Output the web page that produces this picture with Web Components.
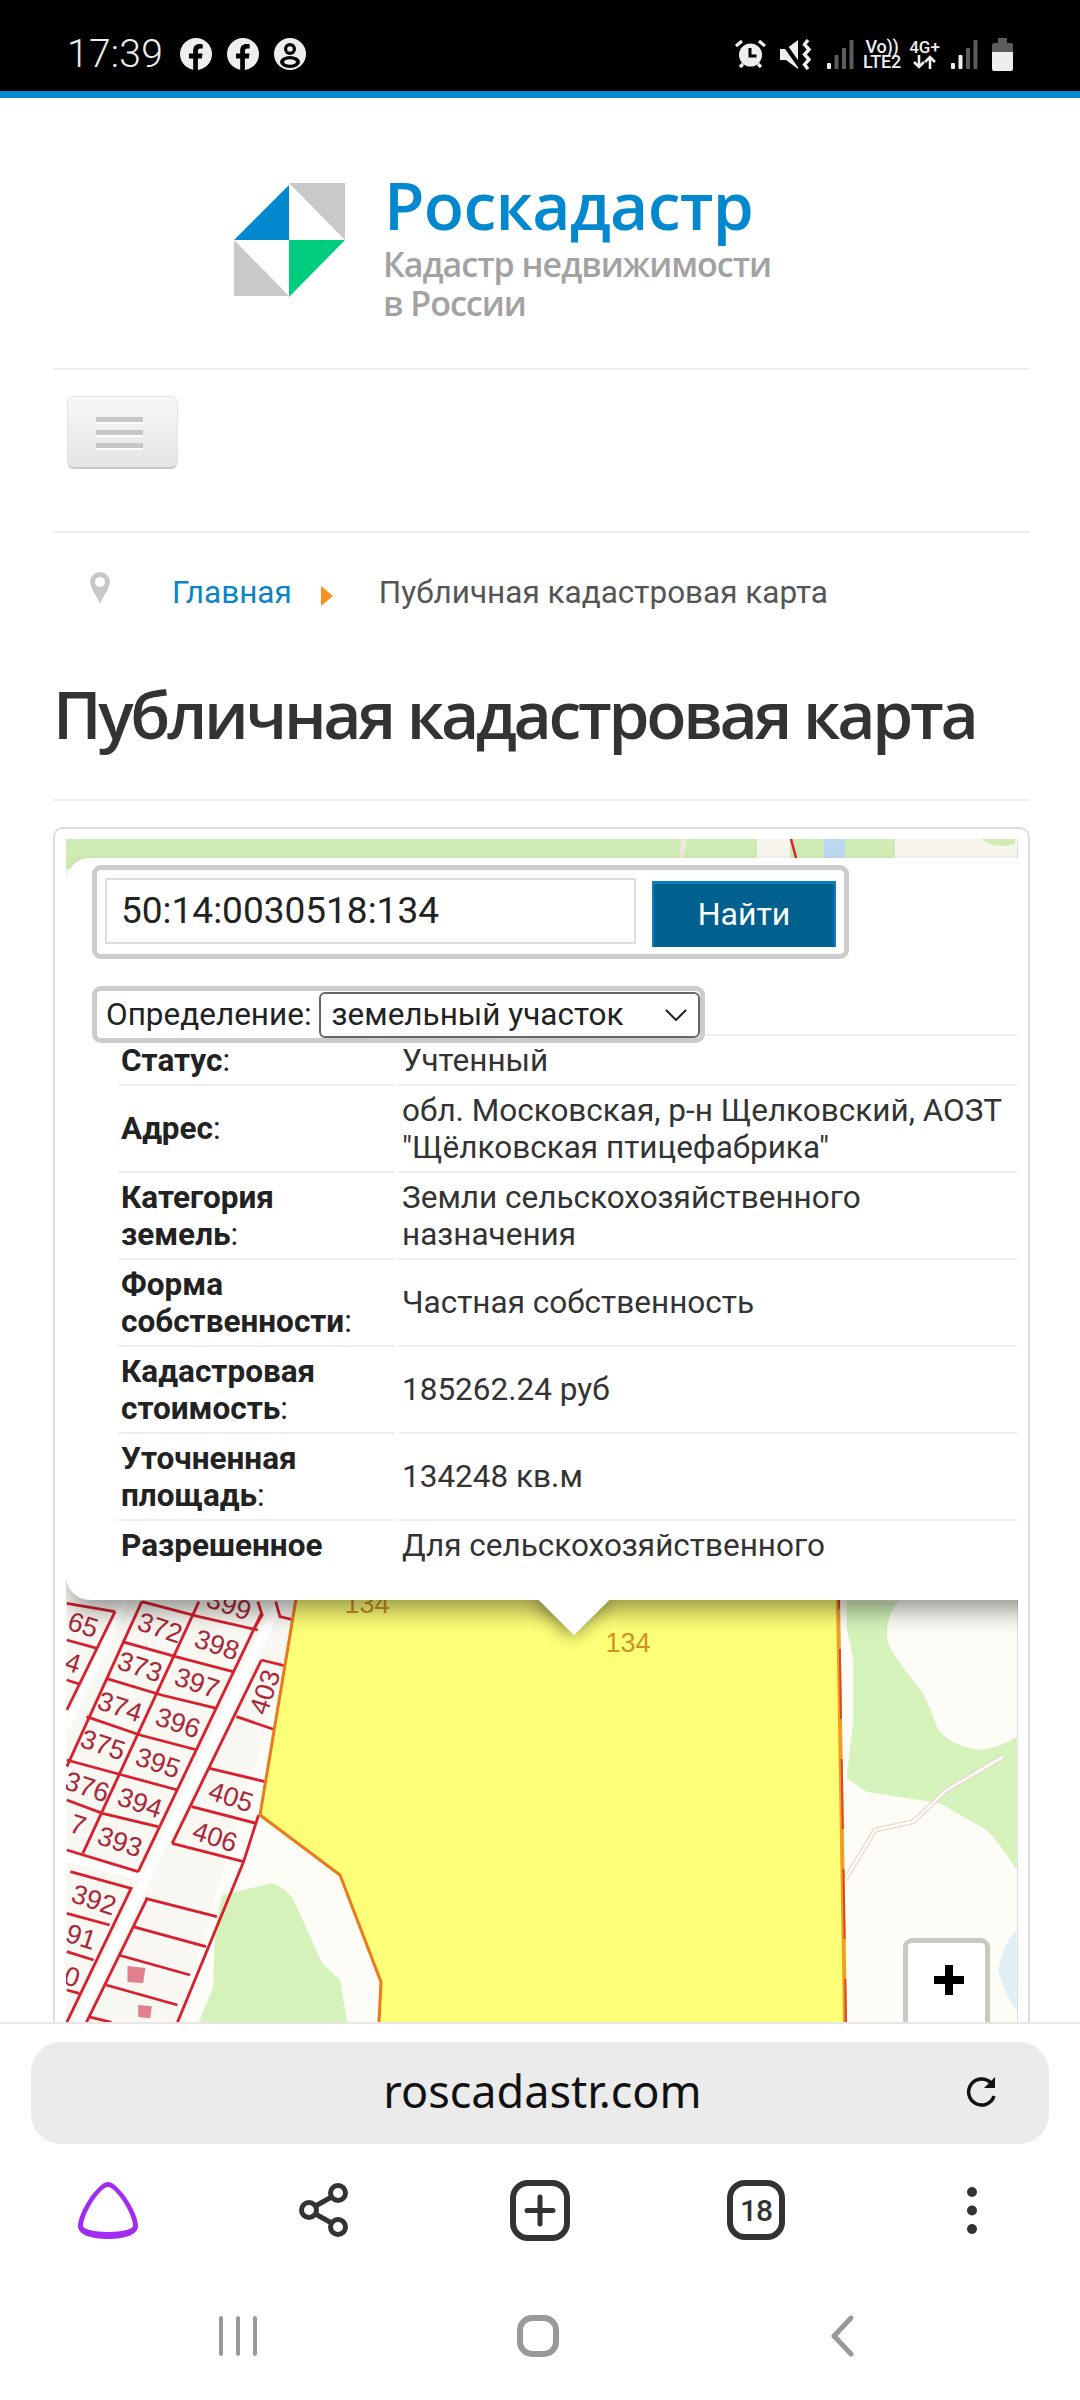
<!DOCTYPE html>
<html lang="ru">
<head>
<meta charset="utf-8">
<title>Публичная кадастровая карта</title>
<style>
  html, body { margin: 0; height: 2400px; overflow: hidden; background: #fff; }
  body { display: flex; flex-direction: column; font-family: Roboto, sans-serif; }
  main { display: block; flex: 1; min-height: 0; overflow: hidden; padding: 0 50px 0 53px; }
</style>
</head>
<body>
<status-bar></status-bar>
<main>
  <site-logo></site-logo>
  <site-menu></site-menu>
  <bread-crumbs><a slot="home">Главная</a><span slot="current">Публичная кадастровая карта</span></bread-crumbs>
  <page-title>Публичная кадастровая карта</page-title>
  <map-card>
    <map-popup>
      <search-form value="50:14:0030518:134" button="Найти" label="Определение:" selected="земельный участок"></search-form>
      <info-row><span slot="label"><b>Статус</b>:</span>Учтенный</info-row>
      <info-row><span slot="label"><b>Адрес</b>:</span>обл. Московская, р-н Щелковский, АОЗТ "Щёлковская птицефабрика"</info-row>
      <info-row><span slot="label"><b>Категория земель</b>:</span>Земли сельскохозяйственного назначения</info-row>
      <info-row><span slot="label"><b>Форма собственности</b>:</span>Частная собственность</info-row>
      <info-row><span slot="label"><b>Кадастровая стоимость</b>:</span>185262.24 руб</info-row>
      <info-row><span slot="label"><b>Уточненная площадь</b>:</span>134248 кв.м</info-row>
      <info-row last><span slot="label"><b>Разрешенное</b></span>Для сельскохозяйственного</info-row>
    </map-popup>
  </map-card>
</main>
<browser-bar url="roscadastr.com" tabs="18"></browser-bar>
<nav-bar></nav-bar>

<script>
class StatusBar extends HTMLElement {
  constructor () {
    super()
    this.shadow = this.attachShadow({ mode: 'open' })
  }

  signal (bright) {
    const bars = [[0, 23, 6], [7.5, 15, 14], [15, 8, 21], [22.5, 0, 29]]
    return `<svg width="27" height="29" viewBox="0 0 27 29">${bars.map((b, i) =>
      `<rect x="${b[0]}" y="${b[1]}" width="4" height="${b[2]}" rx="1" fill="${i < bright ? '#eee' : '#5c5c5c'}"/>`).join('')}</svg>`
  }

  facebook () {
    return `<svg width="32" height="32" viewBox="0 0 32 32"><circle cx="16" cy="16" r="16" fill="#eee"/>
      <path d="M13.2 32V20.500H9v-4.900h4.200v-3.200c0-4.200 2.500-6.400 6.200-6.400 1.300 0 2.600.1 3.300.2v4.200h-2.200c-2 0-2.600 1.100-2.600 2.400v2.800h4.600l-.7 4.900h-3.900V32z" fill="#000"/></svg>`
  }

  connectedCallback () {
    this.shadow.innerHTML = `
      <style>
        :host { display: flex; align-items: center; box-sizing: border-box; height: 98px; padding: 17px 67px 0 67px;
          background: #000; border-bottom: 7px solid #0288cf; color: #eee; font-family: Roboto, sans-serif; }
        .time { font-size: 39px; font-weight: 300; width: 113px; letter-spacing: .3px; }
        .left, .right { display: flex; align-items: center; }
        .left { gap: 15px; }
        .left svg { display: block; }
        .right { margin-left: auto; }
        .right svg { display: block; }
        .net { display: flex; flex-direction: column; align-items: center; font-weight: 500; }
        .vo { width: 40px; margin-left: 8px; font-size: 18px; line-height: 15px; letter-spacing: -.2px; }
        .vo span { display: block; height: 15px; }
        .four { width: 31px; margin-left: 7px; margin-right: 11px; font-size: 17px; line-height: 16px; }
      </style>
      <span class="time">17:39</span>
      <div class="left">
        ${this.facebook()}${this.facebook()}
        <svg width="32" height="32" viewBox="0 0 32 32"><circle cx="16" cy="16" r="16" fill="#eee"/>
          <circle cx="16" cy="11" r="6" fill="#000"/><circle cx="16" cy="11" r="2.800" fill="#eee"/>
          <ellipse cx="16" cy="24" rx="10" ry="6" fill="#000"/><ellipse cx="16" cy="24" rx="6" ry="2.800" fill="#eee"/></svg>
      </div>
      <div class="right">
        <svg width="33" height="32" viewBox="0 0 33 32"><circle cx="16.5" cy="17" r="11.5" fill="#eee"/>
          <path d="M16 10v8h6.5" fill="none" stroke="#000" stroke-width="3"/>
          <path d="M2 8l6-5M31 8l-6-5M6 29l3-3M27 29l-3-3" stroke="#eee" stroke-width="3.2" fill="none"/></svg>
        <svg style="margin-left:13px" width="33" height="31" viewBox="0 0 33 31"><path d="M0 10h6l12-9v29l-12-9H0z" fill="#eee"/>
          <path d="M2 2l19 27" stroke="#000" stroke-width="4"/>
          <path d="M28 1l-3.500 4.500 4.500 5-4.500 5 4.500 5-4.500 5 3.500 4.500" fill="none" stroke="#eee" stroke-width="3.400"/></svg>
        <div style="margin-left:14px">${this.signal(1)}</div>
        <div class="net vo"><span>Vo))</span><span>LTE2</span></div>
        <div class="net four"><span>4G+</span>
          <svg width="24" height="14" viewBox="0 0 24 14"><path d="M6 0v12M1 7l5 5 5-5M17 14V2M12 7l5-5 5 5" fill="none" stroke="#eee" stroke-width="2.600"/></svg></div>
        ${this.signal(2)}
        <svg style="margin-left:14px" width="21" height="33" viewBox="0 0 21 33"><path d="M6 0h9v5h4a2 2 0 012 2v7H0V7a2 2 0 012-2h4z" fill="#5c5c5c"/>
          <path d="M0 14h21v17a2 2 0 01-2 2H2a2 2 0 01-2-2z" fill="#eee"/></svg>
      </div>`
  }
}

class SiteLogo extends HTMLElement {
  connectedCallback () {
    this.attachShadow({ mode: 'open' }).innerHTML = `
      <style>
        :host { display: flex; box-sizing: border-box; height: 272px; padding: 85px 0 0 181px; border-bottom: 2px solid #eee;
          font-family: "Open Sans", sans-serif; }
        svg { display: block; flex: none; }
        .text { margin-left: 39px; margin-top: -20px; }
        .name { color: #0288cf; font-size: 66px; font-weight: 600; line-height: 82px; white-space: nowrap; letter-spacing: -.7px; }
        .sub { color: #a2a2a2; font-size: 34px; font-weight: 600; line-height: 39px; margin-left: -1px; letter-spacing: -1px; }
      </style>
      <svg width="111" height="114" viewBox="0 0 111 114">
        <path d="M55 2L0 57h55z" fill="#0288cf"/>
        <path d="M55 0h56v57z" fill="#c9c9c9"/>
        <path d="M55 57h56l-56 57z" fill="#00cc7e"/>
        <path d="M0 57l55 56H0z" fill="#c9c9c9"/>
      </svg>
      <div class="text">
        <div class="name">Роскадастр</div>
        <div class="sub">Кадастр недвижимости<br>в России</div>
      </div>`
  }
}

class SiteMenu extends HTMLElement {
  connectedCallback () {
    this.attachShadow({ mode: 'open' }).innerHTML = `
      <style>
        :host { display: block; box-sizing: border-box; height: 163px; padding: 26px 0 0 14px; border-bottom: 2px solid #eee; }
        button { display: flex; flex-direction: column; justify-content: center; align-items: center; gap: 8px; width: 111px; height: 73px;
          margin: 0; padding: 0; border: 1px solid #e4e4e4; border-bottom: 2px solid #c9c9c9; border-radius: 7px;
          background: linear-gradient(#f7f7f7, #e5e5e5); }
        i { display: block; width: 47px; height: 5px; background: #c6c6c6; box-shadow: 0 2px 0 #fff; margin-left: -7px; }
      </style>
      <button aria-label="Меню"><i></i><i></i><i></i></button>`
  }
}

class BreadCrumbs extends HTMLElement {
  connectedCallback () {
    this.attachShadow({ mode: 'open' }).innerHTML = `
      <style>
        :host { display: flex; align-items: center; height: 80px; margin-top: 19px; padding-left: 37px;
          font: 31.500px Roboto, sans-serif; color: #555; }
        ::slotted([slot="home"]) { color: #0a84c6; }
        svg { display: block; flex: none; }
        .pin { margin-right: 62px; margin-top: -9px; }
        .arrow { margin: 7px 46px 0 29px; }
      </style>
      <svg class="pin" width="20" height="32" viewBox="0 0 20 32"><path d="M10 0a10 10 0 00-10 10c0 6 7 14 10 22 3-8 10-16 10-22A10 10 0 0010 0zm0 5a5 5 0 110 10 5 5 0 010-10z" fill="#c8c8c8"/></svg>
      <slot name="home"></slot>
      <svg class="arrow" width="12" height="20" viewBox="0 0 12 20"><path d="M0 0l12 10L0 20z" fill="#f7931e"/></svg>
      <slot name="current"></slot>`
  }
}

class PageTitle extends HTMLElement {
  connectedCallback () {
    this.attachShadow({ mode: 'open' }).innerHTML = `
      <style>
        :host { display: block; box-sizing: border-box; height: 169px; padding: 35px 0 0 0; border-bottom: 2px solid #eee;
          font: 600 66px/92px "Open Sans", sans-serif; letter-spacing: -3.300px; color: #333; white-space: nowrap; }
      </style>
      <slot></slot>`
  }
}

class MapCard extends HTMLElement {
  parcels () {
    const numbers = [
      ['65', 120, 195], ['372', 335, 205], ['398', 495, 255], ['4', 92, 310], ['373', 280, 320], ['397', 440, 370],
      ['374', 225, 440], ['396', 385, 490], ['375', 175, 555], ['395', 330, 610], ['376', 132, 680], ['394', 280, 730],
      ['7', 105, 795], ['393', 225, 845], ['405', 535, 710], ['406', 490, 830], ['392', 150, 1020], ['91', 115, 1130],
      ['0', 90, 1250], ['399', 530, 135]
    ]
    return numbers.map(n => {
      const x = 40 + n[1] / 2.8 - 66
      const y = 1560 + n[2] / 3 - 839
      return `<span class="num" style="left:${x.toFixed(1)}px;top:${y.toFixed(1)}px">${n[0]}</span>`
    }).join('')
  }

  connectedCallback () {
    const lines = [
      '620,160 275,935', '445,125 120,880', '285,125 75,620', '210,155 75,450',
      '285,125 445,170 610,210', '230,245 380,290 540,335', '185,355 340,405 495,445', '130,470 280,525 440,570',
      '75,600 230,645 385,690', '75,720 175,760 330,800', '75,870 275,935', '75,130 210,155', '75,240 160,265', '75,360 110,372',
      '85,935 255,985 75,1387', '75,1060 195,1095', '75,1175 150,1200', '75,1290 110,1300',
      '620,300 370,850', '620,300 695,320', '550,470 660,510', '475,625 630,665', '425,740 605,790', '370,850 570,905',
      '300,1015 130,1387', '295,1015 495,1070', '260,1100 465,1160', '220,1185 420,1245', '185,1275 385,1335', '135,1370 200,1387',
      '610,125 622,165 600,205', '660,125 672,170 730,185', '612,765 570,905 385,1387'
    ]
    this.attachShadow({ mode: 'open' }).innerHTML = `
      <style>
        :host { display: block; box-sizing: border-box; margin-top: 26px; height: 1400px; padding: 10px 10px 0 11px;
          border: 2px solid #ddd; border-radius: 10px; }
        .map { position: relative; height: 1320px; overflow: hidden; background: #fdfcf6; }
        svg { position: absolute; left: 0; top: 0; }
        .num, .own { position: absolute; font: 27px/30px "Liberation Sans", sans-serif; white-space: nowrap; }
        .num { color: #a8283a; transform: translate(-50%, -50%) rotate(18deg); }
        .own { color: #cf9420; transform: translate(-50%, -50%); }
        .thin { vector-effect: non-scaling-stroke; fill: none; }
        .popup { position: absolute; left: 0; top: 19px; right: -30px; height: 742px; background: #fff; border-radius: 24px;
          box-shadow: 0 14px 24px -4px rgba(0,0,0,.42); z-index: 2; }
        .tip { position: absolute; left: 456px; top: 761px; width: 104px; height: 52px; overflow: hidden; z-index: 3; }
        .tip i { display: block; position: absolute; left: 27px; top: -25px; width: 50px; height: 50px; background: #fff;
          transform: rotate(45deg); box-shadow: 0 3px 18px rgba(0,0,0,.45); }
        .zoom { position: absolute; left: 837px; top: 1099px; width: 77px; height: 200px; background: #fff; border: 5px solid #c9c9c4;
          border-radius: 9px; z-index: 1; }
        .zoom svg { left: 26px; top: 22px; }
        .edge { position: absolute; right: 0; top: 0; bottom: 0; width: 1px; background: #ddd; z-index: 1; }
      </style>
      <div class="map">
        <svg width="951" height="1183" viewBox="0 0 951 1183">
          <rect x="0" y="0" width="951" height="30" fill="#d0ecb4"/>
          <rect x="691" y="0" width="33" height="30" fill="#f7f5ec"/>
          <path d="M618 0L614 30" stroke="#efe9dc" stroke-width="5"/>
          <path d="M725 0L733 30" stroke="#dd2233" stroke-width="2.500"/>
          <rect x="758" y="0" width="21" height="30" fill="#bcd8f0"/>
          <rect x="829" y="0" width="122" height="30" fill="#f7f5ec"/>
          <path d="M915 0h34v5q-20 6-34-5z" fill="#d0ecb4"/>

          <g transform="translate(494 721) scale(.33333)">
            <path d="M860 122H1015Q970 180 985 250 1000 290 1090 400 1120 470 1130 500 1160 555 1260 570 1330 560 1370 530V930Q1320 850 1280 810L1140 730 920 695 860 655 880 480V300L860 200z" fill="#d5f2ba"/>
            <path d="M855 960L945 810 1060 785 1160 690 1330 590" class="thin" stroke="#e6d9d0" stroke-width="5"/>
            <path d="M855 960L945 810 1060 785 1160 690 1330 590" class="thin" stroke="#fdfcf6" stroke-width="2.500"/>
            <path d="M1370 1110Q1330 1150 1315 1230 1330 1300 1370 1350z" fill="#e0eff5"/>
          </g>

          <g transform="translate(-26 721) scale(.35714 .33333)">
            <path d="M75 122H740L385 1387H75z" fill="#f8f7f1"/>
            <path d="M510 1005L650 970Q690 985 710 1020L790 1210 840 1260 860 1387H445L485 1280 490 1110z" fill="#d5f2ba"/>
            <path d="M670 130L300 950 105 1387" class="thin" stroke="#fff" stroke-width="9"/>
            <path d="M240 122L75 500M75 895L300 955" class="thin" stroke="#fff" stroke-width="7"/>
            ${lines.map(l => `<polyline points="${l}" class="thin" stroke="#d81f2e" stroke-width="2.800"/>`).join('')}
            <path d="M245 1218l50 6-6 46-44-4zM275 1335l38 4-4 36-34-4z" fill="#e0808e"/>
          </g>
          <path d="M240 700L194 976 274 1036 315 1143 313 1183H779L771 700z" fill="#ffff78"/>
          <path d="M240 700L194 976 274 1036 315 1143 313 1183" fill="none" stroke="#ec7a1c" stroke-width="3"/>
          <path d="M771 700L779 1183" fill="none" stroke="#f0a020" stroke-width="4"/>
          <path d="M772 700L780 1183" fill="none" stroke="#e2432a" stroke-width="2" stroke-dasharray="70 40"/>
        </svg>
        ${this.parcels()}
        <span class="num" style="left:199px;top:853px;transform:translate(-50%,-50%) rotate(-72deg)">403</span>
        <span class="own" style="left:301px;top:765px">134</span>
        <span class="own" style="left:562px;top:804px">134</span>
        <div class="edge"></div>
        <div class="popup"><slot></slot></div>
        <div class="tip"><i></i></div>
        <div class="zoom"><svg width="30" height="30" viewBox="0 0 30 30"><path d="M11 0h8v11h11v8H19v11h-8V19H0v-8h11z" fill="#000"/></svg></div>
      </div>`
  }
}

class MapPopup extends HTMLElement {
  connectedCallback () {
    this.attachShadow({ mode: 'open' }).innerHTML = `
      <style>
        :host { display: block; box-sizing: border-box; height: 742px; overflow: hidden; padding: 7px 0 0 26px;
          font: 31.500px/37.500px Roboto, sans-serif; color: #333; }
      </style>
      <slot></slot>`
  }
}

class SearchForm extends HTMLElement {
  connectedCallback () {
    this.attachShadow({ mode: 'open' }).innerHTML = `
      <style>
        :host { display: block; position: relative; z-index: 1; margin-bottom: -9px; font-family: Roboto, sans-serif; color: #222; }
        .box { box-sizing: border-box; border: 5px solid #ccc; border-radius: 9px; background: #fff; }
        .search { display: flex; width: 757px; height: 94px; padding: 8px 8px 0 8px; }
        .input { box-sizing: border-box; width: 531px; height: 66px; padding-left: 14px; border: 2px solid #ddd;
          font-size: 37px; line-height: 62px; color: #222; }
        .btn { box-sizing: border-box; width: 184px; height: 66px; margin: 3px 0 0 16px; background: #00608f; border-top: 3px solid #0a80b8;
          border-left: 2px solid #0a80b8; border-right: 2px solid #0a80b8; color: #fff; font-size: 32px; line-height: 60px; text-align: center; }
        .kind { display: flex; align-items: center; width: 613px; height: 57px; margin-top: 27px; padding: 0 0 0 9px; font-size: 31.500px; color: #222; }
        .select { display: flex; align-items: center; box-sizing: border-box; width: 381px; height: 46px; margin-left: 7px; padding: 0 11px;
          border: 2px solid #666; border-radius: 6px; line-height: 40px; }
        .select svg { margin-left: auto; }
      </style>
      <div class="box search">
        <div class="input">${this.getAttribute('value')}</div>
        <div class="btn">${this.getAttribute('button')}</div>
      </div>
      <div class="box kind">
        <span>${this.getAttribute('label')}</span>
        <div class="select"><span>${this.getAttribute('selected')}</span>
          <svg width="22" height="12" viewBox="0 0 22 12"><path d="M1 1l10 10L21 1" fill="none" stroke="#222" stroke-width="2"/></svg></div>
      </div>`
  }
}

class InfoRow extends HTMLElement {
  connectedCallback () {
    this.attachShadow({ mode: 'open' }).innerHTML = `
      <style>
        :host { display: grid; grid-template-columns: 277px 1fr; column-gap: 4px; margin-left: 26px; width: 899px; }
        :host(:first-of-type) { border-top: 2px solid #eee; }
        .cell { display: flex; align-items: center; box-sizing: border-box; min-height: 48px; padding: 6px 3px 4px; border-bottom: 2px solid #eee; }
        :host([last]) .cell { border-bottom: 0; align-items: flex-start; }
        ::slotted(span) { color: #222; }
      </style>
      <div class="cell"><div><slot name="label"></slot></div></div>
      <div class="cell"><div><slot></slot></div></div>`
  }
}

class BrowserBar extends HTMLElement {
  connectedCallback () {
    this.attachShadow({ mode: 'open' }).innerHTML = `
      <style>
        :host { display: block; box-sizing: border-box; height: 254px; padding-top: 18px; background: #fff; border-top: 2px solid #e6e6e6;
          font-family: "Noto Sans", sans-serif; }
        .url { position: relative; display: flex; align-items: center; justify-content: center; box-sizing: border-box; height: 102px; margin: 0 31px; padding: 0 0 5px 5px;
          border-radius: 30px; background: #ebebeb; font-size: 45px; color: #111; }
        .url svg { position: absolute; right: 50px; top: 33px; }
        .tools { display: grid; grid-template-columns: repeat(5, 216px); height: 132px; }
        .tools div { display: flex; align-items: center; justify-content: center; }
        .tab { position: relative; }
        .tab span { position: absolute; font: 500 30px Roboto, sans-serif; color: #333; letter-spacing: -1px; }
      </style>
      <div class="url">${this.getAttribute('url')}
        <svg width="34" height="34" viewBox="0 0 34 34"><path d="M26 8A13 13 0 1029 21" fill="none" stroke="#111" stroke-width="3.500"/><path d="M30 2v11H19z" fill="#111"/></svg>
      </div>
      <div class="tools">
        <div><svg width="60" height="57" viewBox="0 0 60 57"><path d="M30 0C20 0 0 30 0 44c0 9 14 13 30 13s30-4 30-13C60 30 40 0 30 0z" fill="#a32cf2"/>
          <path d="M30 5C22 5 5 32 5 44c0 3 12 6 25 6s25-3 25-6C55 32 38 5 30 5z" fill="#fff"/></svg></div>
        <div><svg width="50" height="54" viewBox="0 0 50 54"><g fill="none" stroke="#333" stroke-width="5"><circle cx="39" cy="10" r="7.500"/><circle cx="39" cy="44" r="7.500"/><circle cx="10" cy="27" r="7.500"/><path d="M16.500 23L32.500 14M16.500 31L32.500 40"/></g></svg></div>
        <div><svg width="60" height="61" viewBox="0 0 60 61"><rect x="3" y="3" width="54" height="55" rx="15" fill="none" stroke="#333" stroke-width="6"/><path d="M30 17v27M17 30.500h26" stroke="#333" stroke-width="5" stroke-linecap="round"/></svg></div>
        <div class="tab"><svg width="58" height="60" viewBox="0 0 58 60"><rect x="3" y="3" width="52" height="54" rx="15" fill="none" stroke="#333" stroke-width="6"/></svg><span>${this.getAttribute('tabs')}</span></div>
        <div><svg width="10" height="47" viewBox="0 0 10 47"><circle cx="5" cy="5" r="5" fill="#333"/><circle cx="5" cy="23.500" r="5" fill="#333"/><circle cx="5" cy="42" r="5" fill="#333"/></svg></div>
      </div>`
  }
}

class NavBar extends HTMLElement {
  connectedCallback () {
    this.attachShadow({ mode: 'open' }).innerHTML = `
      <style>
        :host { display: grid; grid-template-columns: repeat(3, 302px); justify-content: center; box-sizing: border-box; height: 124px; padding-bottom: 4px; background: #fff; }
        div { display: flex; align-items: center; justify-content: center; }
      </style>
      <div><svg width="38" height="40" viewBox="0 0 38 40"><path d="M2 2v36M19 2v36M36 2v36" stroke="#999" stroke-width="4" stroke-linecap="round"/></svg></div>
      <div><svg width="42" height="42" viewBox="0 0 42 42" style="margin-left:-4px"><rect x="3" y="3" width="36" height="36" rx="12" fill="none" stroke="#999" stroke-width="6"/></svg></div>
      <div><svg width="24" height="42" viewBox="0 0 24 42"><path d="M21 3L4 21l17 18" fill="none" stroke="#999" stroke-width="5" stroke-linecap="round" stroke-linejoin="round"/></svg></div>`
  }
}

customElements.define('status-bar', StatusBar)
customElements.define('site-logo', SiteLogo)
customElements.define('site-menu', SiteMenu)
customElements.define('bread-crumbs', BreadCrumbs)
customElements.define('page-title', PageTitle)
customElements.define('map-card', MapCard)
customElements.define('map-popup', MapPopup)
customElements.define('search-form', SearchForm)
customElements.define('info-row', InfoRow)
customElements.define('browser-bar', BrowserBar)
customElements.define('nav-bar', NavBar)
</script>
</body>
</html>
